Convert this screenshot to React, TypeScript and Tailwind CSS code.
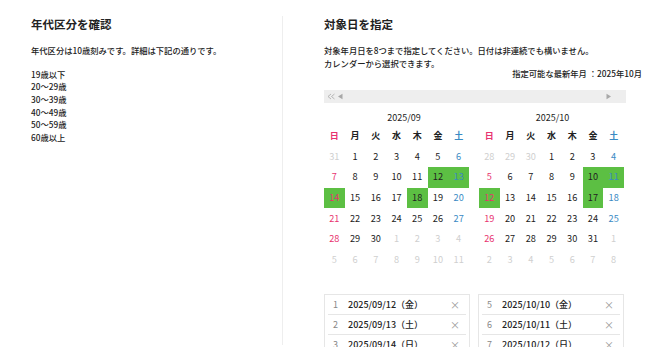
import React from 'react';

type Cell = { d: number; out?: boolean };

const font = { fontFamily: '"Noto Sans CJK JP", "Noto Sans", sans-serif' };

function mk(rows: number[][], outs: [number, number][]): Cell[][] {
  return rows.map((r, ri) =>
    r.map((d, ci) => ({ d, out: outs.some(([a, b]) => a === ri && b === ci) }))
  );
}

const sep = mk(
  [
    [31, 1, 2, 3, 4, 5, 6],
    [7, 8, 9, 10, 11, 12, 13],
    [14, 15, 16, 17, 18, 19, 20],
    [21, 22, 23, 24, 25, 26, 27],
    [28, 29, 30, 1, 2, 3, 4],
    [5, 6, 7, 8, 9, 10, 11],
  ],
  [[0, 0], [4, 3], [4, 4], [4, 5], [4, 6], [5, 0], [5, 1], [5, 2], [5, 3], [5, 4], [5, 5], [5, 6]]
);

const oct = mk(
  [
    [28, 29, 30, 1, 2, 3, 4],
    [5, 6, 7, 8, 9, 10, 11],
    [12, 13, 14, 15, 16, 17, 18],
    [19, 20, 21, 22, 23, 24, 25],
    [26, 27, 28, 29, 30, 31, 1],
    [2, 3, 4, 5, 6, 7, 8],
  ],
  [[0, 0], [0, 1], [0, 2], [4, 6], [5, 0], [5, 1], [5, 2], [5, 3], [5, 4], [5, 5], [5, 6]]
);

const WEEK = ['日', '月', '火', '水', '木', '金', '土'];

function Calendar({ label, cells, picked, labelPad }: { label: string; cells: Cell[][]; picked: number[]; labelPad: string }) {
  return (
    <div className="w-[145px] shrink-0">
      <div className={`text-center text-[9px] leading-[13px] text-[#222] ${labelPad}`}>{label}</div>
      <div className="mt-[2px] grid grid-cols-7">
        {WEEK.map((w, i) => (
          <div
            key={w}
            className={`flex h-[20.7px] items-center justify-center text-[9px] font-bold ${
              i === 0 ? 'text-[#e8336f]' : i === 6 ? 'text-[#3a8ac4]' : 'text-[#222]'
            }`}
          >
            {w}
          </div>
        ))}
        {cells.flatMap((row, ri) =>
          row.map((c, ci) => {
            const sel = !c.out && picked.includes(c.d);
            const color = c.out
              ? 'text-[#cfcfcf]'
              : ci === 0
              ? 'text-[#e8336f]'
              : ci === 6
              ? 'text-[#3a8ac4]'
              : 'text-[#222]';
            return (
              <div
                key={`${ri}-${ci}`}
                className={`flex h-[20.7px] items-center justify-center text-[9.2px] ${color} ${sel ? 'bg-[#5cbf43]' : ''}`}
              >
                {c.d}
              </div>
            );
          })
        )}
      </div>
    </div>
  );
}

function PickList({ items }: { items: [number, string][] }) {
  return (
    <div className="w-[146px] shrink-0 self-start border border-[#e6e6e6] px-[3px]">
      {items.map(([n, d]) => (
        <div key={n} className="flex h-[20px] items-center border-b border-[#e6e6e6] text-[9px]">
          <span className="w-[16px] pl-[5px] text-[#888]">{n}</span>
          <span className="ml-[4px] flex-1 font-medium text-[#222]">{d}</span>
          <span className="mr-[6px] text-[10px] text-[#999]">×</span>
        </div>
      ))}
    </div>
  );
}

export default function App() {
  return (
    <div className="flex h-[353px] w-[650px] overflow-hidden bg-white text-[#222]" style={font}>
      <div className="w-[282px] shrink-0 pl-[31px] pt-[17px]">
        <h2 className="text-[11.5px] font-bold leading-[14px] text-[#222]">年代区分を確認</h2>
        <p className="mt-[12.5px] text-[8.3px] font-medium leading-[13px]">年代区分は10歳刻みです。詳細は下記の通りです。</p>
        <ul className="mt-[11px] text-[8.3px] font-medium leading-[12.7px]">
          <li>19歳以下</li>
          <li>20～29歳</li>
          <li>30～39歳</li>
          <li>40～49歳</li>
          <li>50～59歳</li>
          <li>60歳以上</li>
        </ul>
      </div>

      <div className="mt-[16px] h-[329px] w-px shrink-0 bg-[#eeeeee]" />

      <div className="w-[359px] shrink-0 pl-[41px] pt-[17px]">
        <h2 className="text-[11.5px] font-bold leading-[14px] text-[#222]">対象日を指定</h2>
        <p className="mt-[12.5px] text-[8.3px] font-medium leading-[13px]">
          対象年月日を8つまで指定してください。日付は非連続でも構いません。
          <br />
          カレンダーから選択できます。
        </p>
        <div className="-mt-[3px] text-right text-[8.3px] font-medium leading-[13px]">指定可能な最新年月 ：2025年10月</div>

        <div className="mt-[10.5px] flex h-[13px] w-[302px] items-center bg-[#eeeeee] px-[3px]">
          <svg width="18" height="7" viewBox="0 0 18 7" className="text-[#a8a8a8]">
            <path d="M4 1 L1 3.5 L4 6 M7.5 1 L4.5 3.5 L7.5 6" fill="none" stroke="currentColor" strokeWidth="0.8" />
            <path d="M15.5 0.8 L11 3.5 L15.5 6.2 Z" fill="currentColor" />
          </svg>
          <div className="flex-1" />
          <svg width="7" height="7" viewBox="0 0 7 7" className="mr-[11px] text-[#a8a8a8]">
            <path d="M1.5 0.8 L6 3.5 L1.5 6.2 Z" fill="currentColor" />
          </svg>
        </div>

        <div className="mt-[7.5px] flex gap-[10px]">
          <Calendar label="2025/09" cells={sep} picked={[12, 13, 14, 18]} labelPad="pl-[15px]" />
          <Calendar label="2025/10" cells={oct} picked={[10, 11, 12, 17]} labelPad="pl-[2px]" />
        </div>

        <div className="mt-[23.5px] flex h-[53px] gap-[8px] overflow-hidden">
          <PickList items={[[1, '2025/09/12（金）'], [2, '2025/09/13（土）'], [3, '2025/09/14（日）']]} />
          <PickList items={[[5, '2025/10/10（金）'], [6, '2025/10/11（土）'], [7, '2025/10/12（日）']]} />
        </div>
      </div>
    </div>
  );
}
